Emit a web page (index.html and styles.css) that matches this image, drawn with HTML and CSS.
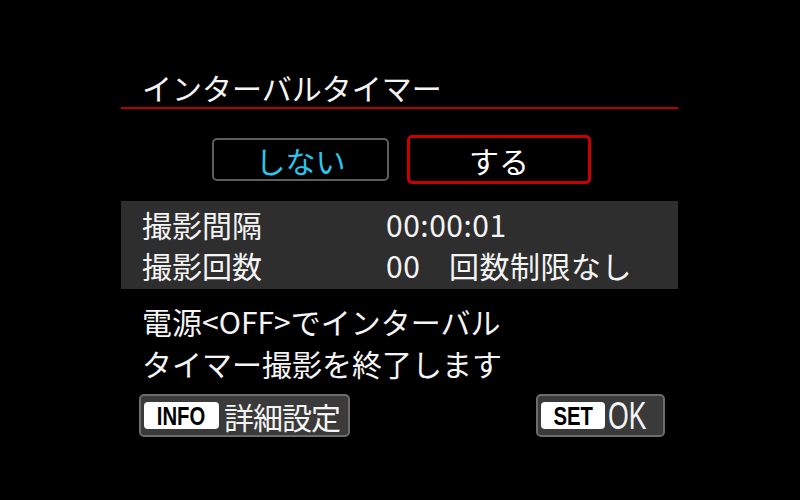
FILE: index.html
```html
<!DOCTYPE html>
<html lang="ja">
<head>
<meta charset="utf-8">
<link rel="stylesheet" href="styles.css">
</head>
<body>
<div class="screen">
  <div class="title">インターバルタイマー</div>
  <div class="choices">
    <div class="choice off">しない</div>
    <div class="choice on">する</div>
  </div>
  <div class="panel">
    <div class="row"><span class="label">撮影間隔</span><span class="value">00:00:01</span></div>
    <div class="row"><span class="label">撮影回数</span><span class="value"><span class="count">00</span>回数制限なし</span></div>
  </div>
  <div class="message">
    <div class="line">電源&lt;OFF&gt;でインターバル</div>
    <div class="line">タイマー撮影を終了します</div>
  </div>
  <div class="footer">
    <div class="btn info"><span class="key"><span class="keytext">INFO</span></span><span class="btntext">詳細設定</span></div>
    <div class="btn set"><span class="key"><span class="keytext">SET</span></span><span class="ok">OK</span></div>
  </div>
</div>
</body>
</html>
```
FILE: styles.css
```css
html, body {
  margin: 0;
  padding: 0;
  background: #000;
}
body {
  width: 800px;
  height: 500px;
  overflow: hidden;
  font-family: "Noto Sans CJK JP", "Noto Sans", sans-serif;
  color: #f4f4f4;
}
.screen {
  margin-left: 121px;
  width: 557px;
  padding-top: 67px;
}
.title {
  font-size: 30px;
  line-height: 40px;
  height: 40px;
  padding-left: 21px;
  border-bottom: 2px solid #b80000;
}
.choices {
  display: flex;
  align-items: center;
  gap: 18px;
  margin-top: 26px;
  padding-left: 91px;
  height: 49px;
}
.choice {
  box-sizing: border-box;
  display: flex;
  align-items: center;
  justify-content: center;
  font-size: 30px;
  line-height: 1;
}
.choice.off {
  width: 177px;
  height: 43px;
  border: 2px solid #5e5e5e;
  border-radius: 5px;
  color: #2cc6ea;
}
.choice.on {
  width: 184px;
  height: 49px;
  border: 3px solid #c80000;
  border-radius: 5px;
  color: #fff;
}
.panel {
  margin-top: 17px;
  background: #2e2e2e;
  padding: 3px 0;
}
.row {
  display: flex;
  height: 41px;
  line-height: 41px;
  font-size: 30px;
  padding-left: 21px;
}
.label {
  width: 244px;
}
.value {
  letter-spacing: 0.5px;
}
.count {
  display: inline-block;
  width: 63px;
}
.message {
  margin-top: 11px;
  padding-left: 21px;
  font-size: 30px;
  line-height: 42px;
}
.footer {
  display: flex;
  justify-content: space-between;
  margin-top: 10px;
  padding-left: 18px;
  padding-right: 13px;
}
.btn {
  box-sizing: border-box;
  height: 43px;
  display: flex;
  align-items: center;
  background: #3a3a3a;
  border: 2px solid #6c6c6c;
  border-radius: 5px;
  padding-left: 3px;
}
.btn.info {
  width: 211px;
}
.btn.set {
  width: 129px;
}
.key {
  display: flex;
  align-items: center;
  justify-content: center;
  height: 27px;
  background: #fff;
  border-radius: 4px;
  color: #000;
}
.info .key {
  width: 75px;
}
.set .key {
  width: 77px;
}
.keytext {
  display: inline-block;
  font-family: "Liberation Sans", "DejaVu Sans", sans-serif;
  font-weight: bold;
  font-size: 26px;
  line-height: 1;
  transform: scaleX(0.78);
}
.btntext {
  margin-left: 5px;
  font-size: 30px;
  line-height: 1;
  letter-spacing: -1px;
}
.ok {
  display: inline-block;
  margin-left: 3px;
  font-family: "Liberation Sans", "DejaVu Sans", sans-serif;
  font-size: 38px;
  line-height: 1;
  transform: scaleX(0.7);
  transform-origin: left center;
}
```
